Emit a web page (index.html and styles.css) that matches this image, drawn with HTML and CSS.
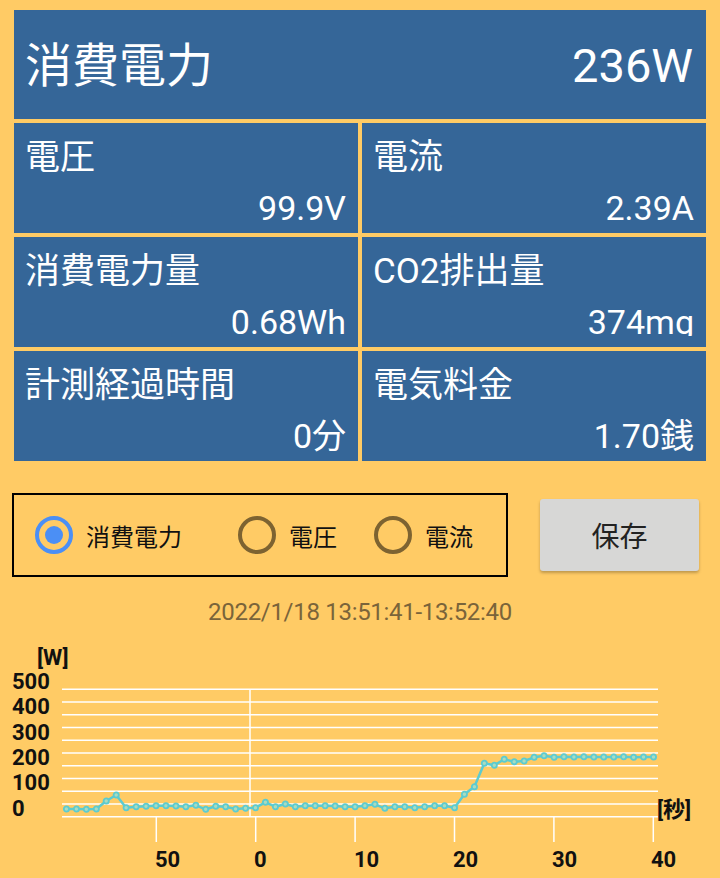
FILE: index.html
```html
<!DOCTYPE html>
<html lang="ja">
<head>
    <meta charset="UTF-8">
    <meta name="viewport" content="width=device-width, initial-scale=1.0">
    <title>電力モニター</title>
    <link rel="stylesheet" href="styles.css">
</head>
<body>
    <div class="readings">
        <div class="tile tile-main">
            <span class="main-label">消費電力</span>
            <span class="main-value">236W</span>
        </div>
        <div class="tile">
            <div class="tile-label">電圧</div>
            <div class="tile-value">99.9V</div>
        </div>
        <div class="tile">
            <div class="tile-label">電流</div>
            <div class="tile-value">2.39A</div>
        </div>
        <div class="tile">
            <div class="tile-label">消費電力量</div>
            <div class="tile-value">0.68Wh</div>
        </div>
        <div class="tile">
            <div class="tile-label">CO2排出量</div>
            <div class="tile-value">374m<span class="cut">g</span></div>
        </div>
        <div class="tile">
            <div class="tile-label">計測経過時間</div>
            <div class="tile-value">0分</div>
        </div>
        <div class="tile">
            <div class="tile-label">電気料金</div>
            <div class="tile-value">1.70銭</div>
        </div>
    </div>

    <div class="controls">
        <div class="radio-group">
            <label class="radio radio-power"><span class="radio-mark checked"></span>消費電力</label>
            <label class="radio radio-voltage"><span class="radio-mark"></span>電圧</label>
            <label class="radio"><span class="radio-mark"></span>電流</label>
        </div>
        <button class="save-btn">保存</button>
    </div>

    <div class="period">2022/1/18 13:51:41-13:52:40</div>

    <div class="chart">
        <svg width="720" height="238" viewBox="0 0 720 238">
            <defs>
                <marker id="dot" markerWidth="8" markerHeight="8" refX="4" refY="4" markerUnits="userSpaceOnUse">
                    <circle cx="4" cy="4" r="2.6" fill="#a9dcc0" stroke="#5ccbd0" stroke-width="1.8"/>
                </marker>
            </defs>
            <!-- grid, every 50W -->
            <g stroke="#ffffff" stroke-width="1.5">
                <line x1="62" y1="49.3" x2="658" y2="49.3"/>
                <line x1="62" y1="62" x2="658" y2="62"/>
                <line x1="62" y1="74.8" x2="658" y2="74.8"/>
                <line x1="62" y1="87.5" x2="658" y2="87.5"/>
                <line x1="62" y1="100.3" x2="658" y2="100.3"/>
                <line x1="62" y1="113" x2="658" y2="113"/>
                <line x1="62" y1="125.8" x2="658" y2="125.8"/>
                <line x1="62" y1="138.5" x2="658" y2="138.5"/>
                <line x1="62" y1="151.3" x2="658" y2="151.3"/>
                <line x1="62" y1="164" x2="658" y2="164"/>
                <line x1="62" y1="176.8" x2="658" y2="176.8"/>
                <line x1="250" y1="49.3" x2="250" y2="176.8"/>
                <line x1="156.3" y1="176.8" x2="156.3" y2="202"/>
                <line x1="255.7" y1="176.8" x2="255.7" y2="202"/>
                <line x1="355.1" y1="176.8" x2="355.1" y2="202"/>
                <line x1="454.5" y1="176.8" x2="454.5" y2="202"/>
                <line x1="553.9" y1="176.8" x2="553.9" y2="202"/>
                <line x1="653.3" y1="176.8" x2="653.3" y2="202"/>
            </g>
            <g class="axis-text">
                <text x="37" y="25">[W]</text>
                <text x="12" y="49">500</text>
                <text x="12" y="74.3">400</text>
                <text x="12" y="99.5">300</text>
                <text x="12" y="125">200</text>
                <text x="12" y="150.3">100</text>
                <text x="12" y="176">0</text>
                <text x="155" y="226.5">50</text>
                <text x="254" y="226.5">0</text>
                <text x="354" y="226.5">10</text>
                <text x="453" y="226.5">20</text>
                <text x="552" y="226.5">30</text>
                <text x="651" y="226.5">40</text>
                <text x="657" y="177">[秒]</text>
            </g>
            <polyline class="series" marker-start="url(#dot)" marker-mid="url(#dot)" marker-end="url(#dot)" points="
                66.4,169 76.4,169 86.3,169.3 96.3,169 106.2,161 116.2,155 126.1,167.7 136.1,166.7 146,166.3 156,165.7
                165.9,165.7 175.9,166 185.8,166.7 195.8,165.3 205.7,169.3 215.7,166.3 225.6,166.7 235.6,169 245.5,168.3 255.5,167.7
                265.4,162.3 275.4,166.7 285.3,164 295.3,166.7 305.2,165.7 315.2,165.7 325.1,165.7 335.1,166 345,166.7 355,166.7
                364.9,165.7 374.9,164.3 384.8,168.3 394.8,166.7 404.7,166.7 414.7,167.7 424.6,166.7 434.6,165.7 444.5,165.7 454.5,167.7
                464.4,154.3 474.4,146.7 484.3,123.3 494.3,125.3 504.2,119.3 514.2,121.7 524.1,121 534.1,117.3 544,115.7 554,117.3
                563.9,116.7 573.9,117 583.8,116.7 593.8,117 603.7,117 613.7,117 623.6,116.7 633.6,117.3 643.5,117 653.5,117"/>
        </svg>
    </div>
</body>
</html>
```

FILE: styles.css
```css
body {
    margin: 0;
    background-color: #ffcb65;
    font-family: Roboto, "Noto Sans CJK JP", sans-serif;
    width: 720px;
    height: 878px;
    overflow: hidden;
}
.readings {
    display: grid;
    grid-template-columns: 1fr 1fr;
    grid-template-rows: 109px repeat(3, 110px);
    gap: 4px;
    padding: 10px 14px 0;
}
.tile {
    background-color: #356698;
    color: white;
    display: flex;
    flex-direction: column;
    justify-content: space-between;
    padding: 0 12px 0 11px;
}
.tile-main {
    grid-column: 1 / 3;
    flex-direction: row;
    align-items: center;
    padding: 2px 13px 0 11px;
}
.main-label {
    font-size: 47px;
    line-height: 1;
}
.main-value {
    font-size: 47px;
    line-height: 1;
}
.tile-label {
    font-size: 35px;
    line-height: 35px;
    padding-top: 17px;
}
.tile-value {
    font-size: 34px;
    line-height: 34px;
    text-align: right;
    margin-bottom: 8px;
}
/* the app cuts the descender of the unit off just under the baseline */
.cut {
    display: inline-block;
    line-height: 27px;
    height: 27px;
    overflow: hidden;
    margin-bottom: -2px;
}
.controls {
    display: flex;
    align-items: center;
    margin-top: 32px;
    height: 84px;
}
.radio-group {
    margin-left: 12px;
    width: 496px;
    height: 84px;
    box-sizing: border-box;
    border: 2px solid #000;
    display: flex;
    align-items: center;
    padding-left: 21px;
}
.radio {
    display: flex;
    align-items: center;
    gap: 13px;
    font-size: 24px;
    color: #111;
}
.radio-power {
    width: 203px;
}
.radio-voltage {
    width: 136px;
}
.radio-mark {
    width: 38px;
    height: 38px;
    box-sizing: border-box;
    border: 4px solid #7d6331;
    border-radius: 50%;
    display: flex;
    align-items: center;
    justify-content: center;
}
.radio-mark.checked {
    border-color: #4b8ff5;
}
.radio-mark.checked::after {
    content: "";
    width: 18px;
    height: 18px;
    border-radius: 50%;
    background-color: #4b8ff5;
}
.save-btn {
    margin-left: 32px;
    width: 159px;
    height: 72px;
    border: none;
    border-radius: 3px;
    background-color: #d7d7d6;
    box-shadow: 0 2px 3px rgba(0, 0, 0, 0.25);
    font-family: "Noto Sans CJK JP", sans-serif;
    font-size: 28px;
    color: #222;
}
.period {
    box-sizing: border-box;
    height: 63px;
    padding-top: 23px;
    font-size: 24px;
    line-height: 1;
    letter-spacing: -0.3px;
    text-align: center;
    color: #7a643a;
}
.chart svg {
    display: block;
}
.axis-text text {
    font-family: Roboto, "Noto Sans CJK JP", sans-serif;
    font-weight: bold;
    font-size: 22px;
    fill: #111;
}
.series {
    fill: none;
    stroke: #5ccbd0;
    stroke-width: 2.5;
    stroke-linejoin: round;
}
```
